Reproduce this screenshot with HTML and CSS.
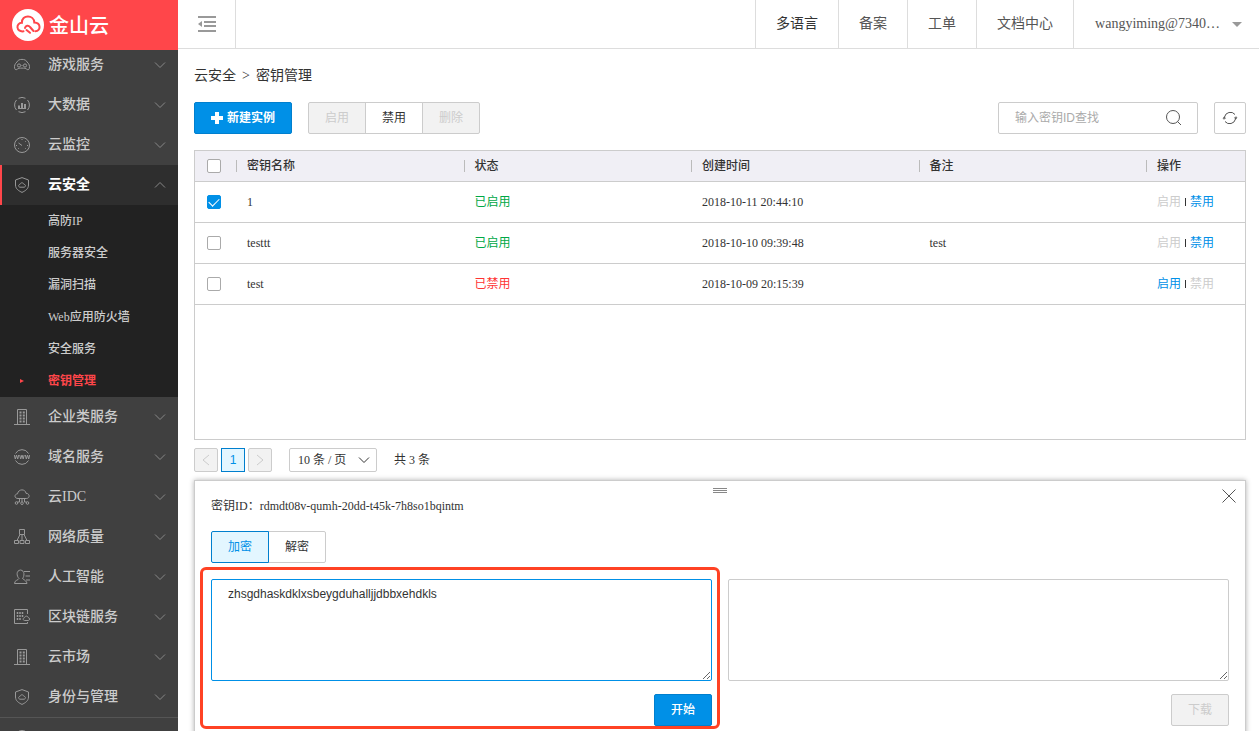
FILE: index.html
```html
<!DOCTYPE html>
<html lang="zh-CN">
<head>
<meta charset="utf-8">
<title>密钥管理</title>
<link rel="stylesheet" href="styles.css">
</head>
<body>
<svg class="sprite" aria-hidden="true">
  <symbol id="down" viewBox="0 0 12 8"><path d="M1 1.500 6 6.500 11 1.500"/></symbol>
  <symbol id="up" viewBox="0 0 12 8"><path d="M1 6.500 6 1.500 11 6.500"/></symbol>
  <symbol id="game" viewBox="0 0 16 16"><path d="M3 5C4 1.500 12 1.500 13 5c2 1.500 3 4 2.300 6.500-.4 1.500-2 1.500-2.800.5-1-1.200-8-1.200-9 0-.8 1-2.400 1-2.800-.5C0 9 1 6.500 3 5z"/><circle cx="5" cy="8.500" r="1.600"/><circle cx="11" cy="8.500" r="1.600"/><path d="M7.500 8.500h1"/></symbol>
  <symbol id="data" viewBox="0 0 16 16"><path d="M4.500 1.300a7.500 7.500 0 0 1 7 0M13.500 3a7.500 7.500 0 0 1 0 10M11.500 14.700a7.500 7.500 0 0 1-7 0M2.500 13a7.500 7.500 0 0 1 0-10"/><path stroke-width="2" d="M5 11V8.500M8 11V6M11 11V7"/><path d="M4 11.500h8"/></symbol>
  <symbol id="monitor" viewBox="0 0 16 16"><circle cx="8" cy="8" r="7.500"/><path d="M4.500 6 8 8.500M8 2v1M2 8.500h1M13 8.500h1M4 12l.7-.7M12 12l-.7-.7M12 4l-.7.7"/></symbol>
  <symbol id="shield" viewBox="0 0 16 16"><path d="M8 .6 14.500 3v5c0 4-3.500 6-6.500 7.400C5 14 1.500 12 1.500 8V3z"/><path d="M6 10.200c-2-.3-1.700-2.700 0-2.800.5-2.200 3.500-2 4 0 2 .2 2 2.500 0 2.800z"/></symbol>
  <symbol id="building" viewBox="0 0 16 16"><path d="M3.500 15V.500h9V15M0 15.500h16"/><path stroke-dasharray="2 1" stroke-width="2" d="M6.500 2.500v11M9.800 2.500v11"/></symbol>
  <symbol id="www" viewBox="0 0 16 16"><path d="M1.500 4.500a7.400 7.400 0 0 1 13 0M1.500 11.500a7.400 7.400 0 0 0 13 0"/><path d="m.3 6 1 4 1.200-4 1.200 4 1-4M5.700 6l1 4L8 6l1.200 4 1-4M11.300 6l1 4 1.200-4 1.200 4 1-4"/></symbol>
  <symbol id="idc" viewBox="0 0 16 16"><path d="M4 9.500C0 9.500.2 5 3.500 4.800 4.500-.5 11.500-.2 12 4.300c4 0 4.200 5.200.3 5.200zM8 10v3M5.500 10v3h-2M10.500 10v3h2"/><circle cx="2.500" cy="14" r="1.300"/><circle cx="8" cy="14.200" r="1.300"/><circle cx="13.500" cy="14" r="1.300"/></symbol>
  <symbol id="network" viewBox="0 0 16 16"><path d="M5.500.5h5v5h-5zM.5 11.500h4v3h-4zM6 11.500h4v3H6zM11.500 11.500h4v3h-4zM6 5.500l-3 6M8 5.500v6M10 5.500l3 6"/></symbol>
  <symbol id="ai" viewBox="0 0 16 16"><path d="M8.500 9.500c2-2 2.500-8-2-8.500C2 1.500 2.500 7 5 9.500 4 11.500.5 11 .5 14.500H13c0-2-2.500-3.500-4.500-5zM10 2.500h6M11.500 7h4.500M12 11h4"/></symbol>
  <symbol id="block" viewBox="0 0 16 16"><path d="M13.500 5V.500H.500v14h13V13"/><path stroke-dasharray="2 1" stroke-width="1.500" d="M3.500 3v9M6 3v9M8.500 3v5"/><path d="M10.500 11.500c-2-.3-1.600-2.700 0-2.800.5-2.200 3.500-2 3.800 0 1.800.2 1.700 2.500 0 2.800z"/></symbol>
</svg>

<div class="app">
  <aside class="sidebar">
    <a class="logo" href="#">
      <svg class="logo-mark" viewBox="0 0 32 32" aria-hidden="true"><circle class="disc" cx="16" cy="16" r="16"/><path class="cloud" d="M11.500 22.300c-7.500 1-8-8.300-1.600-8.500C9.500 5.500 22 5.300 22.300 13.500c7.200.2 6.400 8.800 1.200 8.800M13 19c.5-2.500 3.500-3 5-1l3.500 4M14.500 21l3.500 2.800"/></svg>
      <span>金山云</span>
    </a>
    <nav class="nav">
      <button class="item"><svg class="ico"><use href="#game"/></svg><span>游戏服务</span><svg class="arrow"><use href="#down"/></svg></button>
      <button class="item"><svg class="ico"><use href="#data"/></svg><span>大数据</span><svg class="arrow"><use href="#down"/></svg></button>
      <button class="item"><svg class="ico"><use href="#monitor"/></svg><span>云监控</span><svg class="arrow"><use href="#down"/></svg></button>
      <button class="item open" aria-expanded="true"><svg class="ico"><use href="#shield"/></svg><span>云安全</span><svg class="arrow"><use href="#up"/></svg></button>
      <div class="sub">
        <a href="#">高防IP</a>
        <a href="#">服务器安全</a>
        <a href="#">漏洞扫描</a>
        <a href="#">Web应用防火墙</a>
        <a href="#">安全服务</a>
        <a class="current" href="#">密钥管理</a>
      </div>
      <button class="item"><svg class="ico"><use href="#building"/></svg><span>企业类服务</span><svg class="arrow"><use href="#down"/></svg></button>
      <button class="item"><svg class="ico"><use href="#www"/></svg><span>域名服务</span><svg class="arrow"><use href="#down"/></svg></button>
      <button class="item"><svg class="ico"><use href="#idc"/></svg><span>云IDC</span><svg class="arrow"><use href="#down"/></svg></button>
      <button class="item"><svg class="ico"><use href="#network"/></svg><span>网络质量</span><svg class="arrow"><use href="#down"/></svg></button>
      <button class="item"><svg class="ico"><use href="#ai"/></svg><span>人工智能</span><svg class="arrow"><use href="#down"/></svg></button>
      <button class="item"><svg class="ico"><use href="#block"/></svg><span>区块链服务</span><svg class="arrow"><use href="#down"/></svg></button>
      <button class="item"><svg class="ico"><use href="#building"/></svg><span>云市场</span><svg class="arrow"><use href="#down"/></svg></button>
      <button class="item"><svg class="ico"><use href="#shield"/></svg><span>身份与管理</span><svg class="arrow"><use href="#down"/></svg></button>
      <div class="more"><svg class="ico"><use href="#monitor"/></svg></div>
    </nav>
  </aside>

  <div class="page">
    <header class="topbar">
      <button class="fold" aria-label="收起菜单"><svg viewBox="0 0 18 16"><path d="M0 1h18M6 6h12M6 10h12M0 15h18"/><path class="tri" d="M4 5v6L0 8z"/></svg></button>
      <nav class="links">
        <a class="strong" href="#">多语言</a>
        <a href="#">备案</a>
        <a href="#">工单</a>
        <a href="#">文档中心</a>
        <button class="user"><span>wangyiming@7340…</span><i class="caret"></i></button>
      </nav>
    </header>

    <main class="content">
      <div class="crumbs"><a href="#">云安全</a><span>&gt;</span><span>密钥管理</span></div>

      <div class="tools">
        <button class="btn primary"><svg class="plus" viewBox="0 0 12 12"><path d="M6 0v12M0 6h12"/></svg>新建实例</button>
        <div class="group">
          <button class="btn" disabled>启用</button>
          <button class="btn">禁用</button>
          <button class="btn" disabled>删除</button>
        </div>
        <div class="search">
          <input type="text" placeholder="输入密钥ID查找" aria-label="输入密钥ID查找">
          <button aria-label="查找"><svg viewBox="0 0 16 16"><circle cx="7" cy="7" r="6.500"/><path d="m11.500 11.500 3.500 3.500"/></svg></button>
        </div>
        <button class="btn refresh" aria-label="刷新"><svg viewBox="0 0 16 16"><path d="M2.500 7a6 6 0 0 1 10.500-2.500M13.500 9a6 6 0 0 1-10.500 2.500M14 8V6.500M2 8v1.500"/><path class="tip" d="m.5 8.500 1.700-2 2 2zM11.800 7.500l2 2 1.700-2z"/></svg></button>
      </div>

      <div class="grid">
        <table>
          <colgroup><col class="c-check"><col><col><col><col><col class="c-action"></colgroup>
          <thead>
            <tr><th><input type="checkbox" aria-label="全选"></th><th>密钥名称</th><th>状态</th><th>创建时间</th><th>备注</th><th>操作</th></tr>
          </thead>
          <tbody>
            <tr><td><input type="checkbox" aria-label="1" checked></td><td>1</td><td class="on">已启用</td><td>2018-10-11 20:44:10</td><td></td><td><span class="off-link">启用</span><i class="bar"></i><a href="#">禁用</a></td></tr>
            <tr><td><input type="checkbox" aria-label="testtt"></td><td>testtt</td><td class="on">已启用</td><td>2018-10-10 09:39:48</td><td>test</td><td><span class="off-link">启用</span><i class="bar"></i><a href="#">禁用</a></td></tr>
            <tr><td><input type="checkbox" aria-label="test"></td><td>test</td><td class="off">已禁用</td><td>2018-10-09 20:15:39</td><td></td><td><a href="#">启用</a><i class="bar"></i><span class="off-link">禁用</span></td></tr>
          </tbody>
        </table>
      </div>

      <div class="pager">
        <button class="pg" disabled aria-label="上一页"><svg viewBox="0 0 8 12"><path d="M7 1 1 6l6 5"/></svg></button>
        <button class="pg active">1</button>
        <button class="pg" disabled aria-label="下一页"><svg viewBox="0 0 8 12"><path d="m1 1 6 5-6 5"/></svg></button>
        <div class="size">
          <select aria-label="每页条数"><option>10 条 / 页</option></select>
          <svg><use href="#down"/></svg>
        </div>
        <span>共 3 条</span>
      </div>

      <section class="panel">
        <i class="grip"></i>
        <button class="close" aria-label="关闭"><svg viewBox="0 0 14 14"><path d="m.5.5 13 13M13.500.5l-13 13"/></svg></button>
        <div class="key">密钥ID：rdmdt08v-qumh-20dd-t45k-7h8so1bqintm</div>
        <div class="group">
          <button class="btn active">加密</button>
          <button class="btn">解密</button>
        </div>
        <div class="panes">
          <div class="pane">
            <textarea class="focus" aria-label="加密内容" spellcheck="false">zhsgdhaskdklxsbeygduhalljjdbbxehdkls</textarea>
            <button class="btn primary">开始</button>
            <i class="mark"></i>
          </div>
          <div class="pane">
            <textarea aria-label="结果"></textarea>
            <button class="btn" disabled>下载</button>
          </div>
        </div>
      </section>
    </main>
  </div>
</div>
</body>
</html>
```
FILE: styles.css
```css
*, ::before, ::after { box-sizing: border-box; }

body {
  margin: 0;
  color: #333;
  background: #fff;
  font: 12px/16px "Liberation Serif", "Noto Sans CJK SC", serif;
}

button, input, select, textarea { font: inherit; color: inherit; margin: 0; }
button { padding: 0; border: 0; background: none; cursor: pointer; }
a { color: inherit; text-decoration: none; }
svg { fill: none; stroke: currentColor; stroke-width: 1; flex: none; }
.sprite { position: absolute; width: 0; height: 0; }

.app { display: flex; height: 100vh; overflow: hidden; }

/* Sidebar */
.sidebar {
  display: flex;
  flex-direction: column;
  flex: none;
  width: 178px;
  color: #ccc;
  background: #404040;
}
.logo {
  z-index: 1;
  display: flex;
  align-items: center;
  gap: 5px;
  flex: none;
  height: 50px;
  padding-left: 12px;
  color: #fff;
  background: #ff464a;
  font: 500 20px/24px "Noto Sans CJK SC", sans-serif;
}
.logo-mark { width: 32px; height: 32px; stroke-width: 2; }
.disc { fill: #fff; stroke: none; }
.cloud { stroke: #ff464a; stroke-linecap: round; }

.nav { flex: 1; min-height: 0; margin-top: -5px; overflow: hidden; }
.item {
  display: flex;
  align-items: center;
  width: 100%;
  height: 40px;
  padding: 0 12px 0 14px;
  font-size: 14px;
  font-weight: 500;
  text-align: left;
}
.item span { flex: 1; }
.ico { width: 16px; height: 16px; margin-right: 18px; color: #999; }
.arrow { width: 12px; height: 8px; color: #888; }
.item.open {
  padding-left: 12px;
  border-left: 2px solid #ff464a;
  color: #fff;
  background: #2e2e2e;
  font-weight: 700;
}
.sub { background: #222; }
.sub a {
  display: flex;
  align-items: center;
  height: 32px;
  padding-left: 48px;
  font-weight: 500;
}
.sub .current { padding-left: 20px; color: #ff464a; font-weight: 700; }
.current::before {
  content: "";
  width: 4px;
  margin-right: 24px;
  border: solid transparent;
  border-width: 2px 0 2px 4px;
  border-left-color: #ff464a;
}
.more { padding: 12px 14px; border-top: 1px solid #555; }

/* Top bar */
.page { flex: 1; min-width: 0; display: flex; flex-direction: column; }
.topbar {
  display: flex;
  justify-content: space-between;
  flex: none;
  height: 49px;
  border-bottom: 1px solid #ddd;
}
.fold {
  display: flex;
  align-items: center;
  justify-content: center;
  width: 58px;
  border-right: 1px solid #ddd;
  color: #999;
}
.fold svg { width: 18px; height: 16px; stroke-width: 2; }
.tri { fill: currentColor; stroke: none; }
.links { display: flex; color: #555; font-size: 14px; }
.links > * {
  display: flex;
  align-items: center;
  padding: 0 20px;
  border-left: 1px solid #ddd;
}
.links .strong { color: #333; }
.links .user { gap: 12px; padding: 0 17px 0 21px; font-size: 14px; }
.caret { border: solid transparent; border-width: 5px 5px 0; border-top-color: #999; }

/* Content */
.content { flex: 1; min-height: 0; display: flex; flex-direction: column; padding: 17px 13px 0 16px; }
.crumbs { display: flex; gap: 6px; font-size: 14px; line-height: 20px; }
.tools { display: flex; margin-top: 16px; }

.btn {
  display: flex;
  align-items: center;
  justify-content: center;
  min-width: 58px;
  height: 32px;
  border: 1px solid #ccc;
  border-radius: 2px;
  background: #fff;
  font-family: "Liberation Sans", "Noto Sans CJK SC", sans-serif;
}
.btn:disabled { color: #ccc; background: #f2f2f2; }
.btn.primary { color: #fff; border-color: #007fce; background: #0090e7; font-weight: 500; }
.btn.active { z-index: 1; color: #0090e7; border-color: #007fce; background: #e3f6ff; }
.tools > .primary { gap: 4px; padding: 0 16px; font-weight: 700; }
.plus { width: 12px; height: 12px; stroke-width: 4; }

.group { display: flex; }
.tools .group { margin-left: 16px; }
.group .btn { border-radius: 0; }
.group .btn + .btn { margin-left: -1px; }
.group .btn:first-child { border-radius: 2px 0 0 2px; }
.group .btn:last-child { border-radius: 0 2px 2px 0; }

.search {
  display: flex;
  align-items: center;
  width: 200px;
  height: 32px;
  margin: 0 16px 0 auto;
  padding: 0 15px 0 16px;
  border: 1px solid #ccc;
  border-radius: 2px;
}
.search input {
  flex: 1;
  min-width: 0;
  padding: 0;
  border: 0;
  outline: 0;
  background: none;
  font-family: "Liberation Sans", "Noto Sans CJK SC", sans-serif;
}
.search input::placeholder { color: #aaa; opacity: 1; }
.search svg { display: block; width: 16px; height: 16px; color: #555; }
.refresh { min-width: 32px; }
.refresh svg { width: 16px; height: 16px; color: #555; }
.tip { fill: currentColor; stroke: none; }

/* Key table */
.grid { flex: none; min-height: 290px; margin-top: 16px; border: 1px solid #ccc; }
table { width: 100%; table-layout: fixed; border-spacing: 0; }
.c-check { width: 41px; }
.c-action { width: 99px; }
th, td { padding: 0 0 0 11px; border-bottom: 1px solid #ccc; text-align: left; }
th { height: 31px; background: #f0eff5; font-weight: 500; }
td { height: 41px; }
th + th {
  background: linear-gradient(#bbb, #bbb) 0 50% / 1px 12px no-repeat #f0eff5;
}
.on { color: #00a846; }
.off { color: #ff3333; }
td a { color: #0090e7; }
.off-link { color: #ccc; }
.bar { display: inline-block; width: 1px; height: 8px; margin: 0 4px; background: #333; }

input[type="checkbox"] {
  display: block;
  width: 14px;
  height: 14px;
  margin-left: 1px;
  border: 1px solid #aaa;
  border-radius: 2px;
  background: #fff;
  appearance: none;
}
input[type="checkbox"]:checked { border-color: #0090e7; background: #0090e7; }
input[type="checkbox"]:checked::after {
  content: "";
  display: block;
  width: 10px;
  height: 6px;
  margin: 2px 1px;
  border: solid #fff;
  border-width: 0 0 1px 1px;
  transform: rotate(-45deg);
}

/* Pagination */
.pager { display: flex; align-items: center; gap: 3px; margin-top: 8px; }
.pg {
  display: flex;
  align-items: center;
  justify-content: center;
  width: 24px;
  height: 24px;
  border: 1px solid #ccc;
  border-radius: 2px;
  font-family: "Liberation Sans", sans-serif;
}
.pg svg { width: 8px; height: 12px; }
.pg:disabled { color: #ccc; background: #f2f2f2; }
.pg.active { color: #0090e7; border-color: #007fce; border-radius: 0; background: #e3f6ff; }
.size { position: relative; width: 88px; margin: 0 14px; }
.size select {
  display: block;
  width: 100%;
  height: 24px;
  padding: 0 8px;
  border: 1px solid #ccc;
  border-radius: 2px;
  background: #fff;
  appearance: none;
}
.size svg { position: absolute; right: 7px; top: 8px; width: 12px; height: 8px; pointer-events: none; }

/* Encrypt / decrypt panel */
.panel {
  position: relative;
  flex: 1 0 auto;
  margin-top: 8px;
  padding: 17px 16px 16px;
  border: 1px solid #ccc;
  background: #fff;
  box-shadow: 0 0 5px rgba(0, 0, 0, .3);
}
.grip {
  position: absolute;
  top: 7px;
  left: 50%;
  width: 14px;
  height: 5px;
  margin-left: -7px;
  background: repeating-linear-gradient(#888 0 1px, transparent 1px 2px);
}
.close { position: absolute; top: 8px; right: 9px; color: #555; }
.close svg { display: block; width: 14px; height: 14px; }
.key { margin-bottom: 17px; }
.panes { display: grid; grid-template-columns: 1fr 1fr; gap: 16px; margin-top: 16px; }
.pane { position: relative; display: flex; flex-direction: column; align-items: flex-end; gap: 13px; }
textarea {
  display: block;
  width: 100%;
  height: 102px;
  padding: 6px 16px;
  border: 1px solid #ccc;
  border-radius: 2px;
  outline: 0;
  resize: vertical;
  font-family: "Liberation Sans", sans-serif;
}
textarea.focus { border-color: #0090e7; }
.mark {
  position: absolute;
  inset: -12px -8px -3px -11px;
  border: 3px solid #ff4224;
  border-radius: 6px;
  pointer-events: none;
}
```
